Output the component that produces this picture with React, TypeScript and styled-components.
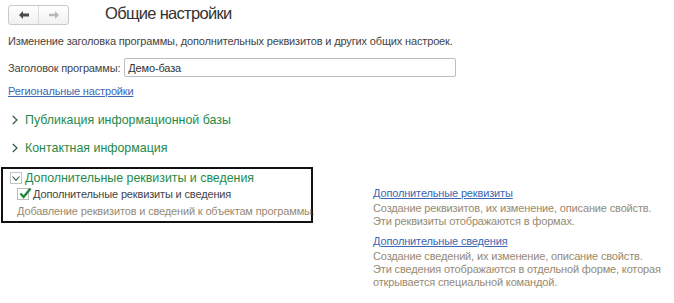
import React from "react";
import styled, { createGlobalStyle } from "styled-components";

const GlobalStyle = createGlobalStyle`
  html, body {
    margin: 0;
    padding: 0;
    background: #fff;
  }
  body {
    font-family: "Liberation Sans", Arial, sans-serif;
    color: #444;
  }
`;

const Page = styled.div`
  width: 674px;
  height: 303px;
  overflow: hidden;
  padding: 0 8px;
  box-sizing: border-box;
`;

const TopBar = styled.div`
  display: flex;
  align-items: center;
  height: 26px;
`;

const NavGroup = styled.div`
  display: flex;
  margin: 3px 0 0 0;
  height: 20px;
  border: 1px solid #c9c9c9;
  border-radius: 3px;
  box-sizing: border-box;
  background: linear-gradient(#ffffff, #f1f1f1);
`;

const NavButton = styled.div<{ $disabled?: boolean }>`
  width: 29px;
  display: flex;
  align-items: center;
  justify-content: center;
  color: ${(p) => (p.$disabled ? "#b8b8b8" : "#4a4a4a")};
  & + & {
    border-left: 1px solid #dcdcdc;
  }
`;

const Title = styled.h1`
  margin: 0 0 0 36px;
  font-size: 16.5px;
  letter-spacing: -0.7px;
  font-weight: normal;
  color: #333;
`;

const SmallText = styled.div`
  font-size: 11px;
  letter-spacing: -0.15px;
  line-height: 16px;
`;

const Description = styled(SmallText)`
  margin-top: 7px;
`;

const FieldRow = styled(SmallText)`
  display: flex;
  align-items: center;
  margin-top: 9px;
  height: 19px;
`;

const Input = styled.div`
  margin-left: 4px;
  width: 332px;
  height: 19px;
  box-sizing: border-box;
  border: 1px solid #bdbdbd;
  border-radius: 2px;
  padding: 0 3px;
  display: flex;
  align-items: center;
  color: #333;
`;

const Link = styled.a`
  display: block;
  color: #3c67b1;
  text-decoration: underline;
  font-size: 11px;
  letter-spacing: -0.15px;
  line-height: 16px;
`;

const RegionalLink = styled(Link)`
  margin-top: 6px;
`;

const Section = styled.div<{ $first?: boolean }>`
  display: flex;
  align-items: center;
  gap: 7px;
  height: 18px;
  margin-top: ${(p) => (p.$first ? "12px" : "10px")};
  color: #1e8a4c;
  font-size: 12.4px;
`;

const Chevron = styled.svg`
  flex: none;
  margin-left: 4px;
`;

const Bottom = styled.div`
  display: flex;
  margin-top: 10px;
`;

const Group = styled.div`
  margin-left: -7px;
  width: 312px;
  height: 56px;
  box-sizing: border-box;
  border: 2px solid #111;
  padding: 0 0 0 7px;
`;

const GroupHeader = styled.div`
  display: flex;
  align-items: center;
  gap: 3px;
  height: 16px;
  margin-top: 1px;
  color: #1e8a4c;
  font-size: 12.4px;
`;

const CollapseBox = styled.div`
  width: 12px;
  height: 12px;
  box-sizing: border-box;
  border: 1px solid #c4c4c4;
  display: flex;
  align-items: center;
  justify-content: center;
`;

const CheckRow = styled(SmallText)`
  display: flex;
  align-items: center;
  gap: 4px;
  height: 14px;
  margin: 1px 0 0 7px;
`;

const CheckBox = styled.div`
  width: 12px;
  height: 12px;
  box-sizing: border-box;
  border: 1px solid #bcbcbc;
  position: relative;
  & svg {
    position: absolute;
    left: 0;
    top: -3px;
  }
`;

const Hint = styled(SmallText)`
  margin: 2px 0 0 7px;
  color: #978a72;
  white-space: nowrap;
`;

const RightColumn = styled.div`
  margin-left: 60px;
  padding-top: 18px;
`;

const Note = styled(SmallText)`
  margin-top: 1px;
  line-height: 13px;
  color: #978a72;
`;

const SecondLink = styled(Link)`
  margin-top: 5px;
`;

const ArrowLeft = () => (
  <svg width="12" height="10" viewBox="0 0 12 10">
    <path d="M1 5 L5 1 L5 3.6 L11 3.6 L11 6.4 L5 6.4 L5 9 Z" fill="currentColor" />
  </svg>
);

const ArrowRight = () => (
  <svg width="12" height="10" viewBox="0 0 12 10">
    <path d="M11 5 L7 1 L7 3.8 L1 3.8 L1 6.2 L7 6.2 L7 9 Z" fill="currentColor" />
  </svg>
);

const SectionChevron = () => (
  <Chevron width="6" height="10" viewBox="0 0 6 10">
    <polyline points="0.8,1 5,5 0.8,9" fill="none" stroke="#2b5a3c" strokeWidth="1.2" />
  </Chevron>
);

export default function App() {
  return (
    <>
      <GlobalStyle />
      <Page>
        <TopBar>
          <NavGroup>
            <NavButton>
              <ArrowLeft />
            </NavButton>
            <NavButton $disabled>
              <ArrowRight />
            </NavButton>
          </NavGroup>
          <Title>Общие настройки</Title>
        </TopBar>
        <Description>
          Изменение заголовка программы, дополнительных реквизитов и других общих настроек.
        </Description>
        <FieldRow>
          Заголовок программы:
          <Input>Демо-база</Input>
        </FieldRow>
        <RegionalLink>Региональные настройки</RegionalLink>
        <Section $first>
          <SectionChevron />
          Публикация информационной базы
        </Section>
        <Section>
          <SectionChevron />
          Контактная информация
        </Section>
        <Bottom>
          <Group>
            <GroupHeader>
              <CollapseBox>
                <svg width="8" height="5" viewBox="0 0 8 5">
                  <polyline points="0.5,0.5 4,4.3 7.5,0.5" fill="none" stroke="#2b5a3c" strokeWidth="1.1" />
                </svg>
              </CollapseBox>
              Дополнительные реквизиты и сведения
            </GroupHeader>
            <CheckRow>
              <CheckBox>
                <svg width="14" height="14" viewBox="0 0 14 14">
                  <polyline points="2.5,7.5 5.6,11 12.5,2.5" fill="none" stroke="#1a8a3c" strokeWidth="2.4" />
                </svg>
              </CheckBox>
              Дополнительные реквизиты и сведения
            </CheckRow>
            <Hint>Добавление реквизитов и сведений к объектам программы.</Hint>
          </Group>
          <RightColumn>
            <Link>Дополнительные реквизиты</Link>
            <Note>
              Создание реквизитов, их изменение, описание свойств.
              <br />
              Эти реквизиты отображаются в формах.
            </Note>
            <SecondLink>Дополнительные сведения</SecondLink>
            <Note>
              Создание сведений, их изменение, описание свойств.
              <br />
              Эти сведения отображаются в отдельной форме, которая
              <br />
              открывается специальной командой.
            </Note>
          </RightColumn>
        </Bottom>
      </Page>
    </>
  );
}
